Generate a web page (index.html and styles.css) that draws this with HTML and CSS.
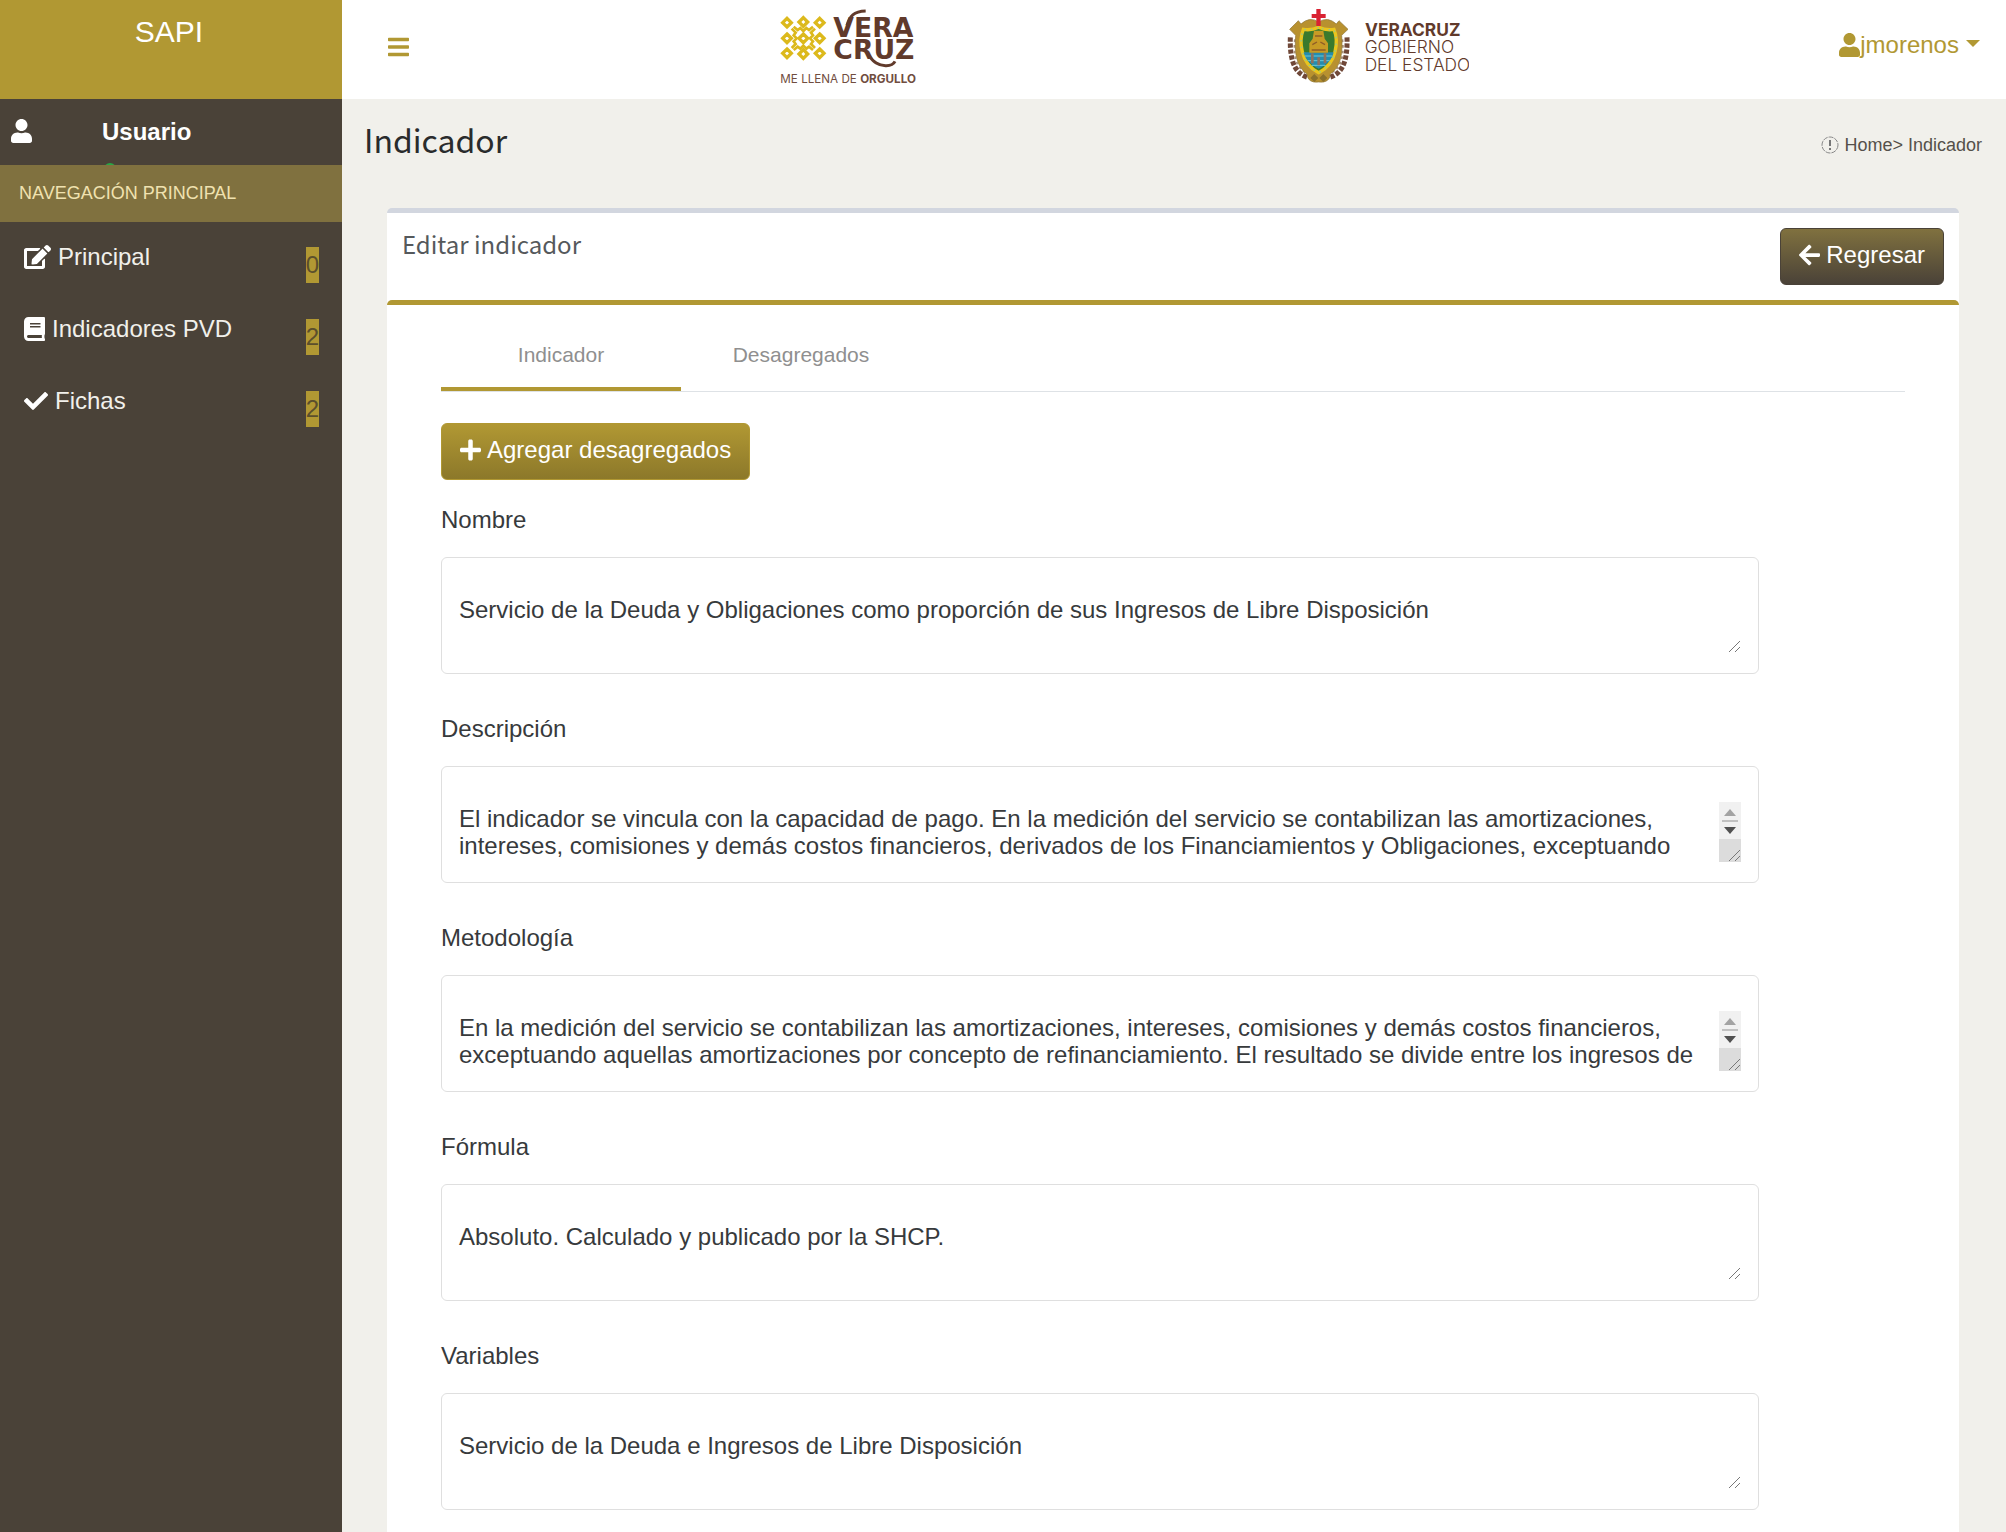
FILE: index.html
```html
<!DOCTYPE html>
<html lang="es">
<head>
<meta charset="utf-8">
<title>SAPI - Indicador</title>
<meta name="viewport" content="width=device-width, initial-scale=1">
<link rel="stylesheet" href="styles.css">
</head>
<body>
<div class="layout">
  <aside class="sidebar">
    <a class="brand" href="#">SAPI</a>
    <div class="user-panel">
      <svg class="icon" width="21" height="24" viewBox="0 0 448 512"><path d="M224 256c70.700 0 128-57.300 128-128S294.700 0 224 0 96 57.300 96 128s57.300 128 128 128zm89.600 32h-16.700c-22.200 10.200-46.900 16-72.900 16s-50.600-5.800-72.900-16h-16.700C60.200 288 0 348.200 0 422.400V464c0 26.500 21.500 48 48 48h352c26.500 0 48-21.500 48-48v-41.600c0-74.200-60.200-134.400-134.400-134.400z"/></svg>
      <div class="user-info">
        <strong>Usuario</strong>
        <span class="status-dot"></span>
      </div>
    </div>
    <nav>
      <h2 class="nav-title">NAVEGACIÓN PRINCIPAL</h2>
      <ul class="nav-list">
        <li><a href="#">
          <svg class="icon" width="27" height="24" viewBox="0 0 576 512"><path d="M402.600 83.200l90.200 90.200c3.800 3.800 3.800 10 0 13.800L274.400 405.600l-92.800 10.300c-12.400 1.400-22.900-9.100-21.500-21.500l10.300-92.800L388.800 83.200c3.800-3.800 10-3.800 13.800 0zm162-22.900l-48.800-48.800c-15.200-15.200-39.900-15.200-55.200 0l-35.400 35.400c-3.800 3.800-3.800 10 0 13.800l90.200 90.200c3.800 3.800 10 3.800 13.800 0l35.400-35.400c15.200-15.300 15.200-40 0-55.200zM384 346.200V448H64V128h229.800c3.200 0 6.200-1.300 8.500-3.500l40-40c7.600-7.600 2.200-20.500-8.500-20.500H48C21.500 64 0 85.500 0 112v352c0 26.500 21.500 48 48 48h352c26.500 0 48-21.500 48-48V306.200c0-10.700-12.900-16-20.500-8.500l-40 40c-2.200 2.300-3.500 5.300-3.500 8.500z"/></svg>
          <span>Principal</span><span class="count">0</span></a></li>
        <li><a href="#">
          <svg class="icon" width="21" height="24" viewBox="0 0 448 512"><path d="M448 360V24c0-13.300-10.700-24-24-24H96C43 0 0 43 0 96v320c0 53 43 96 96 96h328c13.300 0 24-10.700 24-24v-16c0-7.500-3.500-14.300-8.900-18.700-4.200-15.400-4.200-59.300 0-74.700 5.400-4.300 8.900-11.100 8.900-18.600zM128 134c0-3.300 2.700-6 6-6h212c3.300 0 6 2.700 6 6v20c0 3.300-2.700 6-6 6H134c-3.300 0-6-2.700-6-6v-20zm0 64c0-3.300 2.700-6 6-6h212c3.300 0 6 2.700 6 6v20c0 3.300-2.700 6-6 6H134c-3.300 0-6-2.700-6-6v-20zm253.400 250H96c-17.700 0-32-14.300-32-32 0-17.600 14.400-32 32-32h285.400c-1.900 17.100-1.900 46.900 0 64z"/></svg>
          <span>Indicadores PVD</span><span class="count">2</span></a></li>
        <li><a href="#">
          <svg class="icon" width="24" height="24" viewBox="0 0 512 512"><path d="M173.898 439.404l-166.400-166.400c-9.997-9.997-9.997-26.206 0-36.204l36.203-36.204c9.997-9.998 26.207-9.998 36.204 0L192 312.690 432.095 72.596c9.997-9.997 26.207-9.997 36.204 0l36.203 36.204c9.997 9.997 9.997 26.206 0 36.204l-294.400 294.401c-9.998 9.997-26.207 9.997-36.204-.001z"/></svg>
          <span>Fichas</span><span class="count">2</span></a></li>
      </ul>
    </nav>
  </aside>

  <div class="content">
    <header class="topbar">
      <button class="menu-toggle" type="button" aria-label="Menú">
        <svg class="icon" width="21" height="24" viewBox="0 0 448 512"><path d="M16 132h416c8.837 0 16-7.163 16-16V76c0-8.837-7.163-16-16-16H16C7.163 60 0 67.163 0 76v40c0 8.837 7.163 16 16 16zm0 160h416c8.837 0 16-7.163 16-16v-40c0-8.837-7.163-16-16-16H16c-8.837 0-16 7.163-16 16v40c0 8.837 7.163 16 16 16zm0 160h416c8.837 0 16-7.163 16-16v-40c0-8.837-7.163-16-16-16H16c-8.837 0-16 7.163-16 16v40c0 8.837 7.163 16 16 16z"/></svg>
      </button>

      <svg class="logo" width="136" height="80" viewBox="33 24 408 240">
        <g fill="none" stroke="#dcb91c" stroke-width="10">
          <path d="M54 55l13 13-13 13-13-13zM103 53l13 13-13 13-13-13zM152 55l13 13-13 13-13-13z"/>
          <path d="M54 102l13 13-13 13-13-13zM103 102l13 13-13 13-13-13zM152 102l13 13-13 13-13-13z"/>
          <path d="M54 147l13 13-13 13-13-13zM103 149l13 13-13 13-13-13zM152 147l13 13-13 13-13-13z"/>
          <path stroke-width="8" d="M74 80l12 10 8-6 9 9 9-9 8 6 12-10M74 150l12-10 8 6 9-9 9 9 8-6 12 10"/>
          <path stroke-width="8" d="M68 86l12 12-6 8 9 9-9 9 6 8-12 12M138 86l-12 12 6 8-9 9 9 9-6 8 12 12"/>
        </g>
        <g class="logo-word">
          <text x="193" y="112">VERA</text>
          <text x="193" y="177">CRUZ</text>
        </g>
        <path fill="none" stroke="#613a2b" stroke-width="9" d="M234 76C242 48 254 34 290 33M300 168C314 184 326 198 352 197 366 197 374 192 378 184"/>
        <text class="logo-motto" x="34" y="249">ME LLENA DE <tspan class="logo-strong">ORGULLO</tspan></text>
      </svg>

      <svg class="logo" width="182" height="80" viewBox="54 24 546 240">
        <g fill="none" stroke="#704838" stroke-width="15" stroke-dasharray="13 5">
          <path d="M64 112C62 180 76 220 116 232M234 112C236 180 222 220 182 232"/>
        </g>
        <g fill="none" stroke="#a8917c" stroke-width="6" stroke-dasharray="8 9">
          <path d="M78 118C72 178 84 206 118 222M220 118C226 178 214 206 180 222"/>
        </g>
        <path fill="#b8912f" stroke="#8d7335" stroke-width="2" d="M62 88L88 62 96 72Q122 48 149 66 176 48 202 72L210 62 237 88 218 106C222 160 216 200 184 222Q182 250 149 246 116 250 114 222C82 200 76 160 80 106z"/>
        <path fill="#397a2d" stroke="#e9c51e" stroke-width="10" d="M149 82Q126 92 103 88C90 120 92 190 149 218 206 190 208 120 195 88Q172 92 149 82z"/>
        <path fill="none" stroke="#8fc79a" stroke-width="4" stroke-dasharray="4 16" d="M149 82Q126 92 103 88C90 120 92 190 149 218 206 190 208 120 195 88Q172 92 149 82z"/>
        <path fill="#258cae" d="M104 157h90c-5 22-21 38-45 49-24-11-40-27-45-49z"/>
        <path fill="none" stroke="#6dc8d8" stroke-width="3" d="M108 168h82M116 182h66M128 196h42"/>
        <path fill="#c79b25" d="M135 92h28l4 24 10 14v28h-56v-28l10-14z"/>
        <path fill="none" stroke="#8f5d27" stroke-width="4" d="M138 108h22M130 134l14-8M168 134l-14-8M128 150h42"/>
        <path fill="none" stroke="#8c7260" stroke-width="8" d="M130 160v30M168 160v30M149 172v24"/>
        <path fill="#8a702b" d="M124 234l12-12 12 12-12 12zM151 234l12-12 12 12-12 12z"/>
        <path fill="#d92232" d="M142 27h13v15h15v12h-15v24h-13V54h-14V42h14z"/>
        <g class="logo-gov">
          <text class="logo-strong" x="288" y="108">VERACRUZ</text>
          <text x="287" y="160">GOBIERNO</text>
          <text x="287" y="214">DEL ESTADO</text>
        </g>
      </svg>

      <a class="account" href="#">
        <svg class="icon" width="21" height="24" viewBox="0 0 448 512"><path d="M224 256c70.700 0 128-57.300 128-128S294.700 0 224 0 96 57.300 96 128s57.300 128 128 128zm89.600 32h-16.700c-22.200 10.200-46.900 16-72.900 16s-50.600-5.800-72.900-16h-16.700C60.200 288 0 348.200 0 422.400V464c0 26.500 21.500 48 48 48h352c26.500 0 48-21.500 48-48v-41.600c0-74.200-60.200-134.400-134.400-134.400z"/></svg>
        <span>jmorenos</span>
        <span class="caret"></span>
      </a>
    </header>

    <div class="page-head">
      <h1>Indicador</h1>
      <div class="breadcrumb">
        <svg width="18" height="18" viewBox="0 0 18 18"><circle cx="9" cy="9" r="8" fill="none" stroke="#888" stroke-dasharray="5 1"/><path d="M9 4v6M9 12v2" stroke="#777" stroke-width="2"/></svg>
        <span><a href="#">Home</a>&gt; Indicador</span>
      </div>
    </div>

    <main class="card">
      <div class="card-head">
        <h3>Editar indicador</h3>
        <button class="btn btn-dark" type="button">
          <svg class="icon" width="21" height="24" viewBox="0 0 448 512"><path d="M257.500 445.100l-22.200 22.200c-9.400 9.400-24.600 9.400-33.900 0L7 273c-9.400-9.400-9.400-24.600 0-33.900L201.400 44.700c9.400-9.400 24.600-9.400 33.900 0l22.200 22.200c9.500 9.500 9.300 25-.4 34.300L136.600 216H424c13.300 0 24 10.700 24 24v32c0 13.300-10.700 24-24 24H136.600l120.500 114.800c9.800 9.300 10 24.800.4 34.300z"/></svg>
          Regresar
        </button>
      </div>
      <div class="card-body">
        <div class="tabs">
          <a class="tab active" href="#">Indicador</a>
          <a class="tab" href="#">Desagregados</a>
        </div>
        <button class="btn btn-gold" type="button">
          <svg class="icon" width="21" height="24" viewBox="0 0 448 512"><path d="M416 208H272V64c0-17.670-14.330-32-32-32h-32c-17.670 0-32 14.330-32 32v144H32c-17.670 0-32 14.330-32 32v32c0 17.670 14.330 32 32 32h144v144c0 17.670 14.330 32 32 32h32c17.670 0 32-14.330 32-32V304h144c17.670 0 32-14.330 32-32v-32c0-17.670-14.330-32-32-32z"/></svg>
          Agregar desagregados
        </button>
        <form class="fields">
          <div class="field">
            <label for="nombre">Nombre</label>
            <div class="field-box"><textarea id="nombre">Servicio de la Deuda y Obligaciones como proporción de sus Ingresos de Libre Disposición</textarea></div>
          </div>
          <div class="field">
            <label for="descripcion">Descripción</label>
            <div class="field-box scrolls">
              <textarea id="descripcion">El indicador se vincula con la capacidad de pago. En la medición del servicio se contabilizan las amortizaciones, intereses, comisiones y demás costos financieros, derivados de los Financiamientos y Obligaciones, exceptuando</textarea>
              <svg class="scroller" width="22" height="60" viewBox="0 0 22 60"><path fill="#f1f1f1" d="M0 0h22v37H0z"/><path fill="#dcdcdc" d="M0 37h22v23H0z"/><path fill="#a3a3a3" d="M11 7l6 7H5z"/><path fill="#c1c1c1" d="M3 18h16v2H3z"/><path fill="#505050" d="M5 25h12l-6 7z"/><path stroke="#777" d="M10 59l11-11M16 59l5-5"/></svg>
            </div>
          </div>
          <div class="field">
            <label for="metodologia">Metodología</label>
            <div class="field-box scrolls">
              <textarea id="metodologia">En la medición del servicio se contabilizan las amortizaciones, intereses, comisiones y demás costos financieros, exceptuando aquellas amortizaciones por concepto de refinanciamiento. El resultado se divide entre los ingresos de</textarea>
              <svg class="scroller" width="22" height="60" viewBox="0 0 22 60"><path fill="#f1f1f1" d="M0 0h22v37H0z"/><path fill="#dcdcdc" d="M0 37h22v23H0z"/><path fill="#a3a3a3" d="M11 7l6 7H5z"/><path fill="#c1c1c1" d="M3 18h16v2H3z"/><path fill="#505050" d="M5 25h12l-6 7z"/><path stroke="#777" d="M10 59l11-11M16 59l5-5"/></svg>
            </div>
          </div>
          <div class="field">
            <label for="formula">Fórmula</label>
            <div class="field-box"><textarea id="formula">Absoluto. Calculado y publicado por la SHCP.</textarea></div>
          </div>
          <div class="field">
            <label for="variables">Variables</label>
            <div class="field-box"><textarea id="variables">Servicio de la Deuda e Ingresos de Libre Disposición</textarea></div>
          </div>
        </form>
      </div>
    </main>
  </div>
</div>
</body>
</html>
```

FILE: styles.css
```css
* { box-sizing: border-box; }

body {
  margin: 0;
  font: 24px/36px "Liberation Sans", Arial, sans-serif;
  color: #373a3c;
  background: #f1f0eb;
}

a { color: inherit; text-decoration: none; }
h1, h2, h3, ul { margin: 0; padding: 0; font-weight: 400; list-style: none; }
button { font: inherit; cursor: pointer; }
svg { flex: none; display: block; }
.icon { fill: currentColor; }

.layout {
  display: grid;
  grid-template-columns: 342px minmax(0, 1fr);
  min-height: 100vh;
}

/* Sidebar */
.sidebar { background: #4a4238; color: #fff; }

.brand {
  display: block;
  height: 99px;
  padding: 14px 4px 0 0;
  background: #b19833;
  font-size: 30px;
  text-align: center;
}

.user-panel {
  display: flex;
  gap: 70px;
  height: 66px;
  padding: 15px 11px 0;
  overflow: hidden;
}
.user-panel .icon { margin-top: 5px; }
.user-info strong { display: block; }
.status-dot {
  display: block;
  width: 12px;
  height: 12px;
  margin: 13px 0 0 2px;
  border-radius: 50%;
  background: #28a745;
}

.nav-title {
  padding: 10px 19px 11px;
  background: #80713f;
  color: #f0e2b0;
  font-size: 18px;
}

.nav-list a {
  display: flex;
  align-items: center;
  gap: 7px;
  height: 72px;
  padding: 0 23px 2px 24px;
  color: #f1f0eb;
}
.nav-list .icon { fill: #fff; }
.count {
  margin: 16px 0 0 auto;
  background: #b19833;
  color: #5b4f2c;
}

/* Top bar */
.content { display: flex; flex-direction: column; }

.topbar {
  display: flex;
  justify-content: space-between;
  align-items: flex-start;
  height: 99px;
  padding: 8px 26px 0 46px;
  background: #fff;
}
.menu-toggle {
  margin-top: 27px;
  padding: 0;
  border: 0;
  background: none;
  color: #b19833;
}
.logo-word { font: 700 80px "DejaVu Sans", sans-serif; fill: #613a2b; }
.logo-motto { font: 400 35px Inter, sans-serif; fill: #704d40; }
.logo-gov { font: 300 52px Inter, sans-serif; fill: #613a2b; }
.logo-strong { font-weight: 700; }

.account {
  display: flex;
  align-items: center;
  margin-top: 19px;
  color: #b19833;
}
.caret {
  margin: -4px 0 0 7px;
  border: 7px solid transparent;
  border-top-color: currentColor;
  border-bottom: 0;
}

/* Page heading */
.page-head {
  display: flex;
  justify-content: space-between;
  align-items: flex-start;
  height: 109px;
  padding: 22px 24px 0 22px;
}
h1, h3 { font-family: "Noto Sans CJK SC", "Noto Sans", sans-serif; }
h1 { font-size: 32px; color: #292b2c; }
.breadcrumb {
  display: flex;
  align-items: center;
  gap: 5px;
  margin-top: 6px;
  font-size: 18px;
  color: #55504a;
}

/* Card */
.card {
  flex: 1;
  margin: 0 47px 0 45px;
  border-top: 5px solid #d2d6df;
  border-radius: 5px 5px 0 0;
  background: #fff;
}
.card-head {
  display: flex;
  justify-content: space-between;
  align-items: flex-start;
  padding: 15px;
}
h3 { font-size: 24px; line-height: 32px; color: #55595c; }
.card-body {
  padding: 30px 54px 24px;
  border-top: 5px solid #b19833;
  border-radius: 5px 5px 0 0;
}

.btn {
  display: flex;
  align-items: center;
  gap: 6px;
  height: 57px;
  padding: 0 18px 3px;
  border: 1px solid;
  border-radius: 6px;
  color: #fff;
}
.btn-dark {
  border-color: #4a4238;
  background: linear-gradient(#80713f, #4a4238);
}
.btn-gold {
  border-color: #b19833;
  background: linear-gradient(#b19833, #8c782a);
}

.tabs {
  display: flex;
  margin-bottom: 31px;
  border-bottom: 1px solid #dee2e6;
}
.tab {
  width: 240px;
  height: 56px;
  padding-top: 2px;
  border-bottom: 4px solid transparent;
  color: #8f8f8f;
  font-size: 21px;
  text-align: center;
}
.tab.active { border-bottom-color: #b19833; }

/* Fields */
.fields {
  display: grid;
  gap: 37px;
  width: 90%;
  margin-top: 22px;
}
.field { display: grid; gap: 19px; }
.field-box {
  display: flex;
  padding: 35px 17px 20px 14px;
  border: 1px solid #dfdfdf;
  border-radius: 6px;
}
textarea {
  flex: 1;
  height: 60px;
  padding: 3px;
  border: 0;
  outline: 0;
  background: none;
  color: inherit;
  font: inherit;
  line-height: 27px;
  resize: both;
}
.scrolls textarea { resize: none; }

textarea::-webkit-resizer {
  background: url("data:image/svg+xml,%3Csvg xmlns='http://www.w3.org/2000/svg' width='13' height='13'%3E%3Cpath d='M1 12L12 1M7 12l5-5' stroke='%23777' fill='none'/%3E%3C/svg%3E") right bottom no-repeat;
}
```
